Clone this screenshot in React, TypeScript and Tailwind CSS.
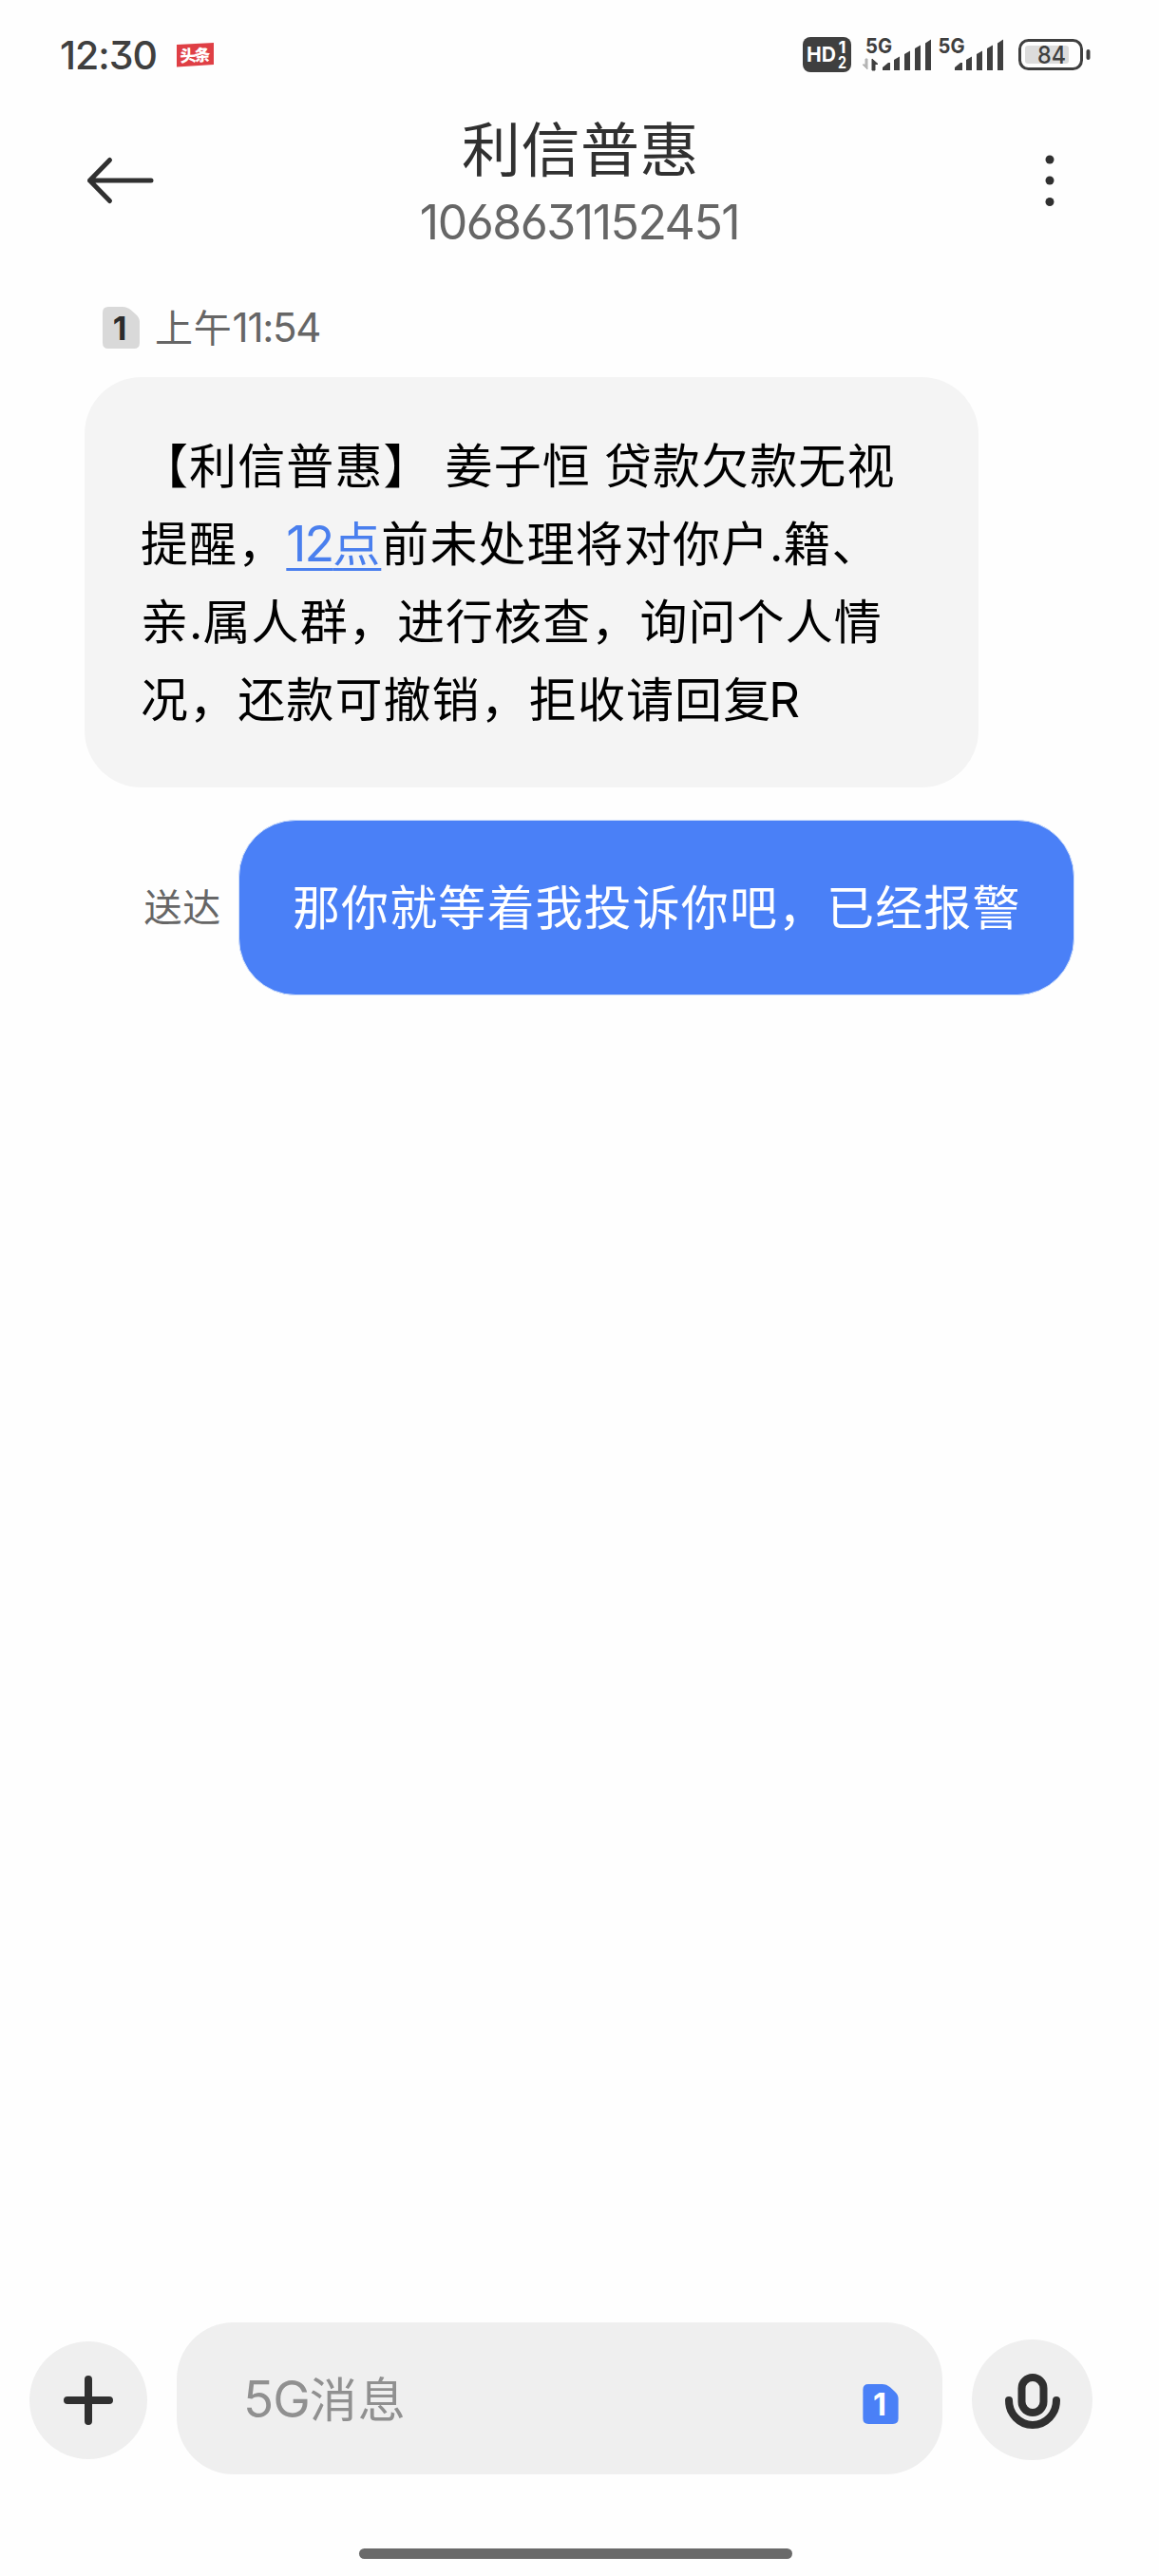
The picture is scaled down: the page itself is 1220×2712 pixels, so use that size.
import type { ReactNode } from "react";

function Latin({ children, className = "" }: { children: ReactNode; className?: string }) {
  return (
    <span
      className={`font-['Inter','Noto_Sans_CJK_SC',sans-serif] leading-none [font-feature-settings:'cv03','cv09'] ${className}`}
    >
      {children}
    </span>
  );
}

function SimBadge({ className, digitClass }: { className: string; digitClass: string }) {
  return (
    <svg viewBox="0 0 39 44" className={className}>
      <path d="M6 0H21Q26 0 30 3.5L35 8Q39 11.500 39 16V38Q39 44 33 44H6Q0 44 0 38V6Q0 0 6 0Z" />
      <text x="18.500" y="34.500" textAnchor="middle" fontSize="34" fontWeight="700" className={digitClass}>
        1
      </text>
    </svg>
  );
}

function SignalBars({ x }: { x: number }) {
  return (
    <g fill="#3f3f3f">
      <path d={`M${x} 54V51L${x + 6} 46H${x + 8}V54Z`} />
      <path d={`M${x + 12} 54V43L${x + 18} 39.500V54Z`} />
      <path d={`M${x + 23} 54V37L${x + 29} 33.500V54Z`} />
      <path d={`M${x + 34} 54V31L${x + 40} 27.500V54Z`} />
      <path d={`M${x + 45} 54V25.500L${x + 51} 21.500V54Z`} />
    </g>
  );
}

function StatusIcons() {
  return (
    <svg viewBox="0 0 310 80" className="mt-1 h-20 w-[310px] font-['Inter',sans-serif]">
      <rect x="6" y="19" width="51" height="37" rx="8" fill="#3f3f3f" />
      <text x="10" y="45" fontSize="22" fontWeight="700" fill="#fff" textLength="31" lengthAdjust="spacingAndGlyphs">
        HD
      </text>
      <text x="43.500" y="36" fontSize="18" fontWeight="700" fill="#fff" textLength="8" lengthAdjust="spacingAndGlyphs">
        1
      </text>
      <text x="43" y="51.500" fontSize="17" fontWeight="700" fill="#fff" textLength="9" lengthAdjust="spacingAndGlyphs">
        2
      </text>

      <text x="72" y="35.500" fontSize="22" fontWeight="700" fill="#3f3f3f" textLength="28" lengthAdjust="spacingAndGlyphs">
        5G
      </text>
      <path d="M74 42V53L69 48H72V42Z" fill="#b5b5b5" stroke="#b5b5b5" />
      <path d="M79 54V42L85 47.500H82V54Z" fill="#3f3f3f" stroke="#3f3f3f" />
      <SignalBars x={90} />

      <text x="148.500" y="35.500" fontSize="22" fontWeight="700" fill="#3f3f3f" textLength="28" lengthAdjust="spacingAndGlyphs">
        5G
      </text>
      <SignalBars x={166} />

      <rect x="234.500" y="22.500" width="65" height="30" rx="9" fill="none" stroke="#3f3f3f" strokeWidth="3" />
      <rect x="240" y="28" width="46" height="19" rx="3" fill="#dcdcdc" />
      <text x="253" y="46.500" fontSize="26" fontWeight="500" fill="#3f3f3f" textLength="30" lengthAdjust="spacingAndGlyphs">
        84
      </text>
      <rect x="304.500" y="32" width="4" height="11" rx="2" fill="#3f3f3f" />
    </svg>
  );
}

function StatusBar() {
  return (
    <div className="flex h-[116px] items-center justify-between pr-[71px] pl-[63px]">
      <div className="flex items-center">
        <Latin className="w-[123px] text-[41px] font-medium tracking-[-1px] text-[#3f3f3f]">12:30</Latin>
        <svg viewBox="0 0 40 26" className="h-[26px] w-10">
          <path d="M0 2L39 0V23L0 25.500Z" fill="#df3f45" />
          <text
            x="3.500"
            y="19.500"
            fontSize="17"
            fontWeight="900"
            fill="#fff"
            transform="rotate(-3 19 13)"
            className="font-['Noto_Sans_CJK_SC',sans-serif]"
            textLength="32"
          >
            头条
          </text>
        </svg>
      </div>
      <StatusIcons />
    </div>
  );
}

function Header() {
  return (
    <header className="flex h-[161px] justify-between pr-[102px] pl-[91px]">
      <svg viewBox="0 0 72 52" fill="none" stroke="#303030" strokeWidth="5" strokeLinecap="round" strokeLinejoin="round" className="mt-12 h-[52px] w-[72px]">
        <path d="M24.500 4.500L3.500 26L24.500 47.500M3.500 26H68" />
      </svg>
      <div className="flex flex-col items-center text-center">
        <h1 className="h-[78px] pl-0.5 text-[62px] leading-[76px] tracking-[0.500px] whitespace-nowrap text-[#303030]">利信普惠</h1>
        <Latin className="mt-[15px] text-[50px] tracking-[-1.500px] text-[#666]">1068631152451</Latin>
      </div>
      <div className="flex w-[61px] justify-end">
        <svg viewBox="0 0 26 56" fill="#303030" className="mt-[46px] h-14 w-[26px]">
          <circle cx="13" cy="6" r="4.500" />
          <circle cx="13" cy="28" r="4.500" />
          <circle cx="13" cy="50.500" r="4.500" />
        </svg>
      </div>
    </header>
  );
}

function IncomingMessage() {
  return (
    <div className="ml-[89px] h-[432px] w-[941px] rounded-[60px] bg-[#f4f4f4] pt-[49px] pl-[59px] text-[50px] leading-[82px] tracking-[1.100px] whitespace-nowrap text-black">
      <p>
        【利信普惠】<span className="inline-block w-[14px]"> </span>姜子恒<span className="inline-block w-[14px]"> </span>贷款欠款无视
      </p>
      <p>
        提醒，
        <span className="text-[#4a7fee] underline decoration-[2.500px] underline-offset-[7px]">
          <Latin className="text-[52px] tracking-[-2px]">12</Latin>点
        </span>
        前未处理将对你户<Latin className="tracking-[0px]">.</Latin>籍、
      </p>
      <p>
        亲<Latin className="tracking-[0px]">.</Latin>属人群，进行核查，询问个人情
      </p>
      <p>
        况，还款可撤销，拒收请回复<Latin className="-ml-[3px] text-[51px]">R</Latin>
      </p>
    </div>
  );
}

function OutgoingMessage() {
  return (
    <div className="mt-[34px] flex items-center justify-end pr-[89px]">
      <span className="mr-[18px] -mt-1.5 text-[40px] tracking-[0.800px] text-[#666]">送达</span>
      <div className="h-[185px] w-[880px] rounded-[60px] border-[1.500px] border-[#cfdffa] bg-[#4a80f7] pl-[56px] text-[50px] leading-[177px] tracking-[1.100px] whitespace-nowrap text-white">
        那你就等着我投诉你吧，已经报警
      </div>
    </div>
  );
}

function Composer() {
  return (
    <footer className="mt-auto h-[267px] pl-[31px]">
      <div className="flex h-40 items-center">
        <button className="mt-[3px] flex size-[124px] items-center justify-center rounded-full bg-[#efefef]">
          <svg viewBox="0 0 54 54" stroke="#303030" strokeWidth="8" strokeLinecap="round" className="size-[54px]">
            <path d="M27 5V49M5 27H49" />
          </svg>
        </button>
        <div className="ml-[31px] flex h-40 w-[806px] items-center justify-between rounded-[60px] bg-[#efefef] pr-[46px] pl-[70px]">
          <span className="-mt-1 text-[50px] leading-[80px] tracking-[1px] text-[#909090]">
            <Latin className="text-[53px] tracking-[-1px]">5G</Latin>消息
          </span>
          <SimBadge className="mt-3 h-[42px] w-[38px] fill-[#4a80f7]" digitClass="fill-white font-['Inter',sans-serif]" />
        </div>
        <button className="mt-[3px] ml-[31px] flex size-[127px] items-center justify-center rounded-full bg-[#efefef]">
          <svg viewBox="0 0 60 60" fill="none" stroke="#303030" strokeWidth="8" strokeLinecap="round" className="size-[60px]">
            <rect x="18.500" y="6" width="23" height="37" rx="11.500" />
            <path d="M5 30A25 26 0 0 0 55 30" />
          </svg>
        </button>
      </div>
      <div className="mt-[78px] ml-[347px] h-[11px] w-[456px] rounded-full bg-[#6a6a6a]" />
    </footer>
  );
}

export default function App() {
  return (
    <div className="flex h-[2712px] w-[1220px] flex-col bg-[#fefefe] font-['Noto_Sans_CJK_SC',sans-serif]" lang="zh-CN">
      <StatusBar />
      <Header />
      <main>
        <div className="mt-[33px] mb-[17px] flex h-[70px] items-center pl-[108px] text-[40px] leading-[70px] tracking-[0.800px] text-[#666]">
          <SimBadge className="mr-[16px] h-11 w-[39px] fill-[#d9d9d9]" digitClass="fill-[#2b2b2b] font-['Inter',sans-serif]" />
          <span className="-mt-1 whitespace-nowrap">
            上午<Latin className="text-[42px] tracking-[-1.300px]">11:54</Latin>
          </span>
        </div>
        <IncomingMessage />
        <OutgoingMessage />
      </main>
      <Composer />
    </div>
  );
}
